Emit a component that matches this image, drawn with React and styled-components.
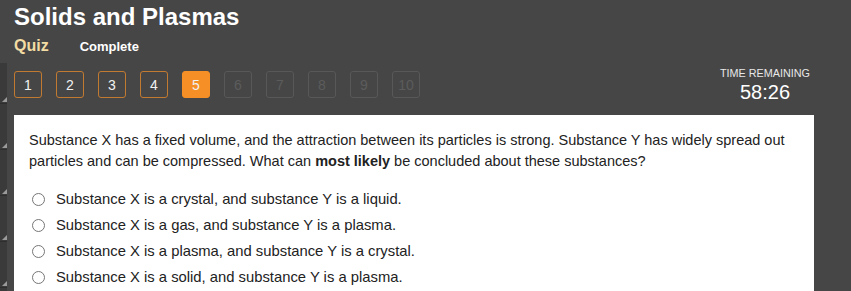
import React from "react";
import styled, { createGlobalStyle } from "styled-components";

const Global = createGlobalStyle`
  html, body { margin: 0; padding: 0; background: #464646; }
  body { font-family: "Liberation Sans", Arial, sans-serif; overflow: hidden; }
`;

const Page = styled.div`
  width: 851px;
  height: 291px;
  background: #464646;
  display: flex;
  flex-direction: column;
  overflow: hidden;
`;

const Header = styled.header`
  padding: 3px 14px 0;
`;

const Title = styled.h1`
  margin: 0;
  font-size: 24px;
  line-height: 27px;
  font-weight: 700;
  color: #ffffff;
`;

const SubRow = styled.div`
  display: flex;
  align-items: baseline;
  gap: 31px;
  margin-top: 7px;
`;

const QuizLabel = styled.span`
  font-size: 16px;
  font-weight: 700;
  color: #f3dca3;
`;

const Status = styled.span`
  font-size: 13px;
  font-weight: 700;
  color: #ffffff;
`;

const Body = styled.div`
  flex: 1;
  display: flex;
  margin-top: 8px;
`;

const Sidebar = styled.div`
  width: 7px;
  display: flex;
  flex-direction: column;
  background: #3a3a3a;
`;

const SideSeg = styled.div`
  position: relative;
  height: ${(p) => p.$h}px;
  border-bottom: 1px solid #2e2e2e;
  &::after {
    content: "";
    position: absolute;
    right: 0;
    bottom: 1px;
    width: 0;
    height: 0;
    border-left: 5px solid transparent;
    border-bottom: 5px solid #9a9a9a;
  }
`;

const Main = styled.div`
  flex: 1;
  padding-left: 7px;
  display: flex;
  flex-direction: column;
`;

const NavRow = styled.div`
  display: flex;
  justify-content: space-between;
  align-items: flex-start;
  height: 52px;
  flex: none;
  box-sizing: border-box;
  padding-top: 6px;
  padding-right: 41px;
`;

const Pager = styled.div`
  display: flex;
  gap: 14px;
  margin-top: 2px;
`;

const PageBtn = styled.button`
  width: 28px;
  height: 27px;
  padding: 0;
  box-sizing: border-box;
  border-radius: 3px;
  font-family: "Liberation Sans", Arial, sans-serif;
  font-size: 14px;
  display: flex;
  align-items: center;
  justify-content: center;
  border: 1px solid
    ${(p) => (p.$state === "active" ? "#f68f26" : p.$state === "done" ? "#c27a30" : "#585858")};
  background: ${(p) => (p.$state === "active" ? "#f68f26" : "transparent")};
  color: ${(p) => (p.$state === "disabled" ? "#5c5c5c" : "#f2f2f2")};
`;

const Timer = styled.div`
  display: flex;
  flex-direction: column;
  align-items: center;
  margin-top: -2px;
`;

const TimerLabel = styled.div`
  font-size: 10.8px;
  color: #e8e8e8;
  line-height: 12px;
`;

const TimerValue = styled.div`
  font-size: 20px;
  color: #ffffff;
  line-height: 22px;
  margin-top: 2px;
`;

const Panel = styled.section`
  width: 800px;
  flex: 1;
  background: #ffffff;
  box-sizing: border-box;
  padding: 15px 0 0 15px;
  color: #222222;
`;

const Question = styled.p`
  margin: 0;
  font-size: 14.5px;
  line-height: 21px;
`;

const Options = styled.ul`
  list-style: none;
  margin: 14px 0 0;
  padding: 0 0 0 3px;
`;

const Option = styled.li`
  display: flex;
  align-items: center;
  height: 26px;
  gap: 11px;
  font-size: 14.8px;
`;

const Radio = styled.span`
  width: 11px;
  height: 11px;
  border: 1px solid #767676;
  border-radius: 50%;
  background: #fff;
  flex: none;
`;

const pages = [1, 2, 3, 4, 5, 6, 7, 8, 9, 10];
const options = [
  "Substance X is a crystal, and substance Y is a liquid.",
  "Substance X is a gas, and substance Y is a plasma.",
  "Substance X is a plasma, and substance Y is a crystal.",
  "Substance X is a solid, and substance Y is a plasma.",
];

export default function App() {
  return (
    <Page>
      <Global />
      <Header>
        <Title>Solids and Plasmas</Title>
        <SubRow>
          <QuizLabel>Quiz</QuizLabel>
          <Status>Complete</Status>
        </SubRow>
      </Header>
      <Body>
        <Sidebar>
          <SideSeg $h={40} />
          <SideSeg $h={45} />
          <SideSeg $h={45} />
          <SideSeg $h={45} />
          <SideSeg $h={45} />
        </Sidebar>
        <Main>
          <NavRow>
            <Pager>
              {pages.map((n) => (
                <PageBtn
                  key={n}
                  $state={n < 5 ? "done" : n === 5 ? "active" : "disabled"}
                >
                  {n}
                </PageBtn>
              ))}
            </Pager>
            <Timer>
              <TimerLabel>TIME REMAINING</TimerLabel>
              <TimerValue>58:26</TimerValue>
            </Timer>
          </NavRow>
          <Panel>
            <Question>
              Substance X has a fixed volume, and the attraction between its particles is strong. Substance Y has widely spread out particles and can be compressed. What can <b>most likely</b> be concluded about these substances?
            </Question>
            <Options>
              {options.map((o) => (
                <Option key={o}>
                  <Radio />
                  {o}
                </Option>
              ))}
            </Options>
          </Panel>
        </Main>
      </Body>
    </Page>
  );
}
